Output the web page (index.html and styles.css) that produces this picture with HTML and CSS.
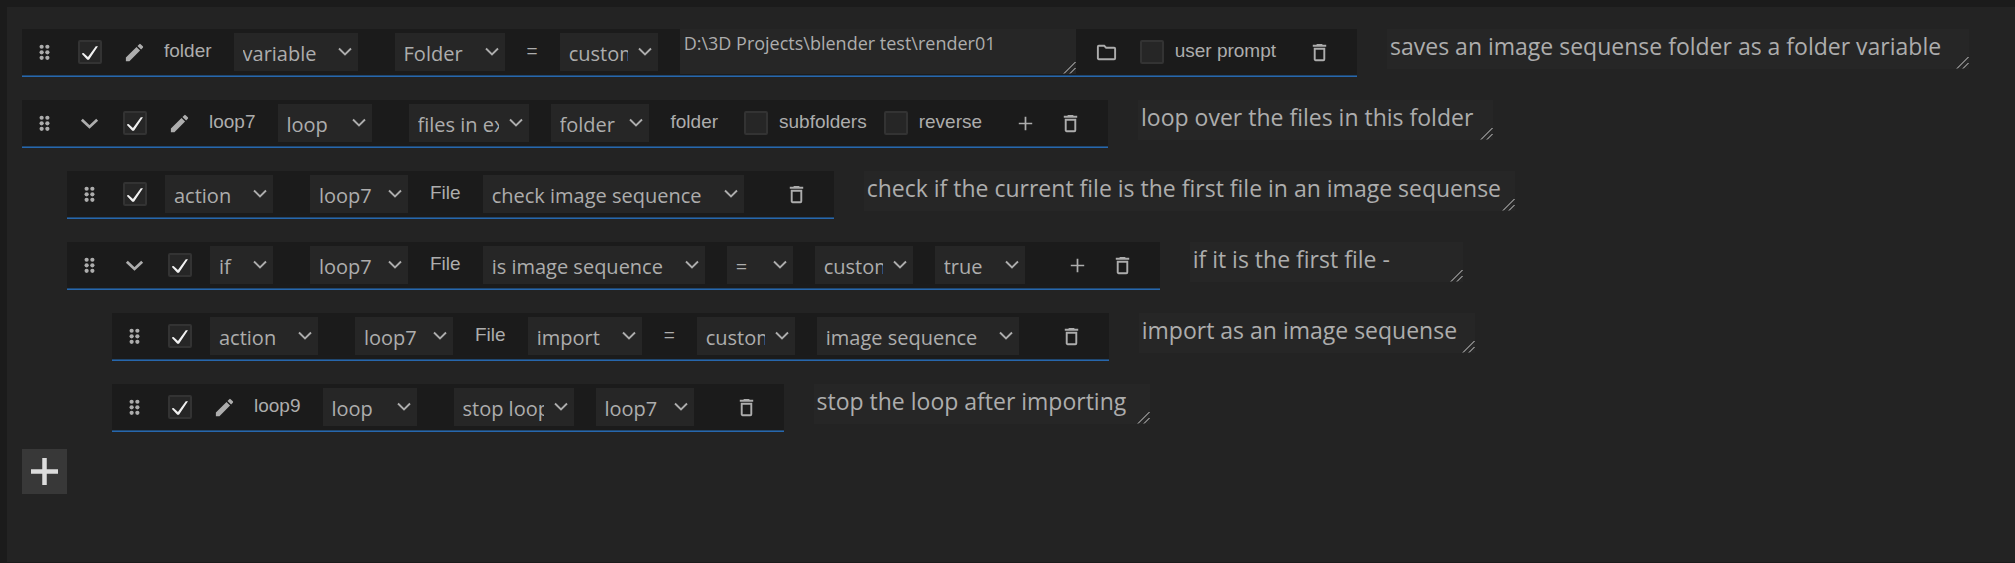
FILE: index.html
```html
<!DOCTYPE html>
<html lang="en">
<head>
<meta charset="utf-8">
<title>Script editor</title>
<link rel="stylesheet" href="styles.css">
</head>
<body>
<svg class="sprite" aria-hidden="true">
  <symbol id="drag" viewBox="0 0 24 24"><g fill="currentColor"><circle cx="9" cy="6" r="2.200"/><circle cx="15" cy="6" r="2.200"/><circle cx="9" cy="11.800" r="2.200"/><circle cx="15" cy="11.800" r="2.200"/><circle cx="9" cy="17.600" r="2.200"/><circle cx="15" cy="17.600" r="2.200"/></g></symbol>
  <symbol id="fold" viewBox="0 0 24 24"><path d="M4 8l8 7.600L20 8" fill="none" stroke="currentColor" stroke-width="2.900"/></symbol>
  <symbol id="arrow" viewBox="0 0 14 10"><path d="M1 1.500l6 6 6-6" fill="none" stroke="currentColor" stroke-width="1.900"/></symbol>
  <symbol id="pencil" viewBox="0 0 24 24"><path fill="currentColor" d="M3 17.300V21h3.700L17.800 9.900l-3.700-3.700L3 17.300zM20.700 7a1 1 0 0 0 0-1.400l-2.300-2.300a1 1 0 0 0-1.400 0l-1.900 1.800 3.800 3.800L20.700 7z"/></symbol>
  <symbol id="folder" viewBox="0 0 24 24"><path fill="currentColor" d="M9.200 6l2 2H20v10H4V6h5.200M10 4H4a2 2 0 0 0-2 2v12c0 1.100.9 2 2 2h16a2 2 0 0 0 2-2V8a2 2 0 0 0-2-2h-8l-2-2z"/></symbol>
  <symbol id="trash" viewBox="0 0 24 24"><path fill="currentColor" d="M6 19c0 1.100.9 2 2 2h8a2 2 0 0 0 2-2V7H6v12zM8 9h8v10H8V9zm7.500-5l-1-1h-5l-1 1H5v2h14V4h-3.500z"/></symbol>
  <symbol id="plus" viewBox="0 0 24 24"><path d="M12 5v14M5 12h14" fill="none" stroke="currentColor" stroke-width="1.800"/></symbol>
</svg>
<main class="panel">
  <section class="row">
    <div class="bar">
      <button class="cell" aria-label="Drag"><svg class="icon"><use href="#drag"/></svg></button>
      <label class="cell"><input class="check" type="checkbox" checked aria-label="Enabled"></label>
      <button class="cell" aria-label="Rename"><svg class="icon"><use href="#pencil"/></svg></button>
      <span class="name">folder</span>
      <span class="pick kind w-124"><select aria-label="Type"><option>variable</option></select><svg class="arrow"><use href="#arrow"/></svg></span>
      <span class="pick w-110"><select aria-label="Variable type"><option>Folder</option></select><svg class="arrow"><use href="#arrow"/></svg></span>
      <span class="word">=</span>
      <span class="pick w-98"><select aria-label="Source"><option>custom</option></select><svg class="arrow"><use href="#arrow"/></svg></span>
      <textarea class="path" aria-label="Path" spellcheck="false">D:\3D Projects\blender test\render01</textarea>
      <button class="cell browse" aria-label="Browse"><svg class="icon"><use href="#folder"/></svg></button>
      <label class="option"><input class="check" type="checkbox"><span class="caption">user prompt</span></label>
      <div class="actions">
        <button class="cell" aria-label="Delete"><svg class="icon"><use href="#trash"/></svg></button>
      </div>
    </div>
    <textarea class="note n-582" aria-label="Note" spellcheck="false">saves an image sequense folder as a folder variable</textarea>
  </section>

  <section class="row">
    <div class="bar">
      <button class="cell" aria-label="Drag"><svg class="icon"><use href="#drag"/></svg></button>
      <button class="cell" aria-label="Collapse"><svg class="icon"><use href="#fold"/></svg></button>
      <label class="cell"><input class="check" type="checkbox" checked aria-label="Enabled"></label>
      <button class="cell" aria-label="Rename"><svg class="icon"><use href="#pencil"/></svg></button>
      <span class="name">loop7</span>
      <span class="pick kind w-94"><select aria-label="Type"><option>loop</option></select><svg class="arrow"><use href="#arrow"/></svg></span>
      <span class="pick w-120"><select aria-label="Loop over"><option>files in explorer</option></select><svg class="arrow"><use href="#arrow"/></svg></span>
      <span class="pick w-98"><select aria-label="Source"><option>folder</option></select><svg class="arrow"><use href="#arrow"/></svg></span>
      <span class="word">folder</span>
      <label class="option"><input class="check" type="checkbox"><span class="caption">subfolders</span></label>
      <label class="option"><input class="check" type="checkbox"><span class="caption">reverse</span></label>
      <div class="actions">
        <button class="cell" aria-label="Add"><svg class="icon"><use href="#plus"/></svg></button>
        <button class="cell" aria-label="Delete"><svg class="icon"><use href="#trash"/></svg></button>
      </div>
    </div>
    <textarea class="note n-355" aria-label="Note" spellcheck="false">loop over the files in this folder</textarea>
  </section>

  <section class="row level-1">
    <div class="bar">
      <button class="cell" aria-label="Drag"><svg class="icon"><use href="#drag"/></svg></button>
      <label class="cell"><input class="check" type="checkbox" checked aria-label="Enabled"></label>
      <span class="pick kind w-108"><select aria-label="Type"><option>action</option></select><svg class="arrow"><use href="#arrow"/></svg></span>
      <span class="pick w-98"><select aria-label="Target"><option>loop7</option></select><svg class="arrow"><use href="#arrow"/></svg></span>
      <span class="word">File</span>
      <span class="pick w-261"><select aria-label="Action"><option>check image sequence</option></select><svg class="arrow"><use href="#arrow"/></svg></span>
      <div class="actions">
        <button class="cell" aria-label="Delete"><svg class="icon"><use href="#trash"/></svg></button>
      </div>
    </div>
    <textarea class="note n-651" aria-label="Note" spellcheck="false">check if the current file is the first file in an image sequense</textarea>
  </section>

  <section class="row level-1">
    <div class="bar">
      <button class="cell" aria-label="Drag"><svg class="icon"><use href="#drag"/></svg></button>
      <button class="cell" aria-label="Collapse"><svg class="icon"><use href="#fold"/></svg></button>
      <label class="cell"><input class="check" type="checkbox" checked aria-label="Enabled"></label>
      <span class="pick kind w-63"><select aria-label="Type"><option>if</option></select><svg class="arrow"><use href="#arrow"/></svg></span>
      <span class="pick w-98"><select aria-label="Target"><option>loop7</option></select><svg class="arrow"><use href="#arrow"/></svg></span>
      <span class="word">File</span>
      <span class="pick w-222"><select aria-label="Property"><option>is image sequence</option></select><svg class="arrow"><use href="#arrow"/></svg></span>
      <span class="pick w-66"><select aria-label="Operator"><option>=</option></select><svg class="arrow"><use href="#arrow"/></svg></span>
      <span class="pick w-98"><select aria-label="Source"><option>custom</option></select><svg class="arrow"><use href="#arrow"/></svg></span>
      <span class="pick w-90"><select aria-label="Value"><option>true</option></select><svg class="arrow"><use href="#arrow"/></svg></span>
      <div class="actions">
        <button class="cell" aria-label="Add"><svg class="icon"><use href="#plus"/></svg></button>
        <button class="cell" aria-label="Delete"><svg class="icon"><use href="#trash"/></svg></button>
      </div>
    </div>
    <textarea class="note n-273" aria-label="Note" spellcheck="false">if it is the first file -</textarea>
  </section>

  <section class="row level-2">
    <div class="bar">
      <button class="cell" aria-label="Drag"><svg class="icon"><use href="#drag"/></svg></button>
      <label class="cell"><input class="check" type="checkbox" checked aria-label="Enabled"></label>
      <span class="pick kind w-108"><select aria-label="Type"><option>action</option></select><svg class="arrow"><use href="#arrow"/></svg></span>
      <span class="pick w-98"><select aria-label="Target"><option>loop7</option></select><svg class="arrow"><use href="#arrow"/></svg></span>
      <span class="word">File</span>
      <span class="pick w-114"><select aria-label="Action"><option>import</option></select><svg class="arrow"><use href="#arrow"/></svg></span>
      <span class="word">=</span>
      <span class="pick w-98"><select aria-label="Source"><option>custom</option></select><svg class="arrow"><use href="#arrow"/></svg></span>
      <span class="pick w-202"><select aria-label="Import as"><option>image sequence</option></select><svg class="arrow"><use href="#arrow"/></svg></span>
      <div class="actions">
        <button class="cell" aria-label="Delete"><svg class="icon"><use href="#trash"/></svg></button>
      </div>
    </div>
    <textarea class="note n-336" aria-label="Note" spellcheck="false">import as an image sequense</textarea>
  </section>

  <section class="row level-2">
    <div class="bar">
      <button class="cell" aria-label="Drag"><svg class="icon"><use href="#drag"/></svg></button>
      <label class="cell"><input class="check" type="checkbox" checked aria-label="Enabled"></label>
      <button class="cell" aria-label="Rename"><svg class="icon"><use href="#pencil"/></svg></button>
      <span class="name">loop9</span>
      <span class="pick kind w-94"><select aria-label="Type"><option>loop</option></select><svg class="arrow"><use href="#arrow"/></svg></span>
      <span class="pick w-120"><select aria-label="Loop action"><option>stop loop</option></select><svg class="arrow"><use href="#arrow"/></svg></span>
      <span class="pick w-98"><select aria-label="Loop"><option>loop7</option></select><svg class="arrow"><use href="#arrow"/></svg></span>
      <div class="actions">
        <button class="cell" aria-label="Delete"><svg class="icon"><use href="#trash"/></svg></button>
      </div>
    </div>
    <textarea class="note n-336" aria-label="Note" spellcheck="false">stop the loop after importing</textarea>
  </section>

  <button class="add" aria-label="Add line"><svg viewBox="0 0 27 27"><path d="M13.500 0v27M0 13.500h27" fill="none" stroke="currentColor" stroke-width="4.500"/></svg></button>
</main>
</body>
</html>
```
FILE: styles.css
```css
* {
  box-sizing: border-box;
}

html {
  color-scheme: dark;
  background: #1b1b1b;
}

body {
  margin: 0;
  padding: 7px 0 1px 7px;
  min-height: 100vh;
  display: flex;
  flex-direction: column;
  color: #adadad;
  font: 19px/22px "Liberation Sans", Arial, sans-serif;
}

.sprite {
  display: none;
}

.panel {
  flex: 1;
  padding: 22px 15px;
  background: #232323;
}

.row {
  display: flex;
  align-items: flex-start;
  gap: 30px;
  margin-bottom: 23px;
}

.level-1 {
  margin-left: 45px;
}

.level-2 {
  margin-left: 90px;
}

.bar {
  flex: none;
  display: flex;
  align-items: center;
  height: 48px;
  padding: 0 15px 1px 0;
  background: #1b1b1b;
  border-bottom: 1px solid #2767ad;
  box-shadow: inset 0 -1px #20476f;
}

button {
  padding: 0;
  border: 0;
  background: none;
  color: inherit;
}

.cell {
  flex: none;
  display: flex;
  align-items: center;
  justify-content: center;
  width: 45px;
  height: 45px;
}

label.cell + .pick {
  margin-left: 8px;
}

.icon {
  width: 23px;
  height: 23px;
}

.check {
  appearance: none;
  flex: none;
  display: grid;
  place-items: end;
  width: 24px;
  height: 24px;
  margin: 0;
  padding: 2px;
  border: 2px solid #333333;
  border-radius: 2px;
  background: #262626;
}

.check:checked::before {
  content: "";
  width: 17px;
  height: 14px;
  background: #f0f0f0;
  clip-path: polygon(0 54%, 12% 50%, 38% 78%, 84% 2%, 97% 2%, 44% 98%, 34% 98%);
}

.name,
.word,
.caption {
  padding-bottom: 2px;
}

.name {
  margin: 0 22px 0 7px;
}

.word {
  margin-right: 22px;
}

.pick {
  display: grid;
  align-items: center;
  height: 38px;
  margin-right: 22px;
  background: #262626;
}

.pick.kind {
  margin-right: 37px;
}

.pick select,
.pick .arrow {
  grid-area: 1 / 1;
}

.pick select {
  appearance: none;
  width: 100%;
  height: 38px;
  padding: 3px 30px 0 9px;
  border: 0;
  border-radius: 0;
  background: none;
  color: inherit;
  font: 20px/28px "Open Sans", sans-serif;
}

.arrow {
  justify-self: end;
  width: 14px;
  height: 10px;
  margin-right: 6px;
  pointer-events: none;
}

.w-63 { width: 63px; }
.w-66 { width: 66px; }
.w-90 { width: 90px; }
.w-94 { width: 94px; }
.w-98 { width: 98px; }
.w-108 { width: 108px; }
.w-110 { width: 110px; }
.w-114 { width: 114px; }
.w-120 { width: 120px; }
.w-124 { width: 124px; }
.w-202 { width: 202px; }
.w-222 { width: 222px; }
.w-261 { width: 261px; }

textarea {
  border: 0;
  margin: 0;
  overflow: hidden;
  resize: both;
  color: inherit;
  background: #262626;
}

textarea::-webkit-resizer {
  background: url("data:image/svg+xml,%3Csvg xmlns='http://www.w3.org/2000/svg' width='15' height='15'%3E%3Cpath d='M3 14.500L14.500 3M9 14.500L14.500 9' stroke='%23d0d0d0' stroke-width='1'/%3E%3C/svg%3E") right bottom no-repeat;
}

.path {
  align-self: flex-start;
  width: 396px;
  height: 45px;
  padding: 2px 4px;
  font: 18px/24px "Open Sans", sans-serif;
}

.browse {
  margin: 0 7px 0 8px;
}

.option {
  display: flex;
  align-items: center;
  gap: 11px;
  padding: 0 13px 0 4px;
}

.actions {
  display: flex;
  margin-left: 8px;
}

.note {
  height: 40px;
  padding: 3px;
  font: 23px/28px "Open Sans", sans-serif;
}

.n-273 { width: 273px; }
.n-336 { width: 336px; }
.n-355 { width: 355px; }
.n-582 { width: 582px; }
.n-651 { width: 651px; }

.add {
  display: flex;
  align-items: center;
  justify-content: center;
  width: 45px;
  height: 45px;
  margin-top: -6px;
  background: #383838;
  color: #dcdcdc;
}

.add svg {
  width: 27px;
  height: 27px;
}
```
